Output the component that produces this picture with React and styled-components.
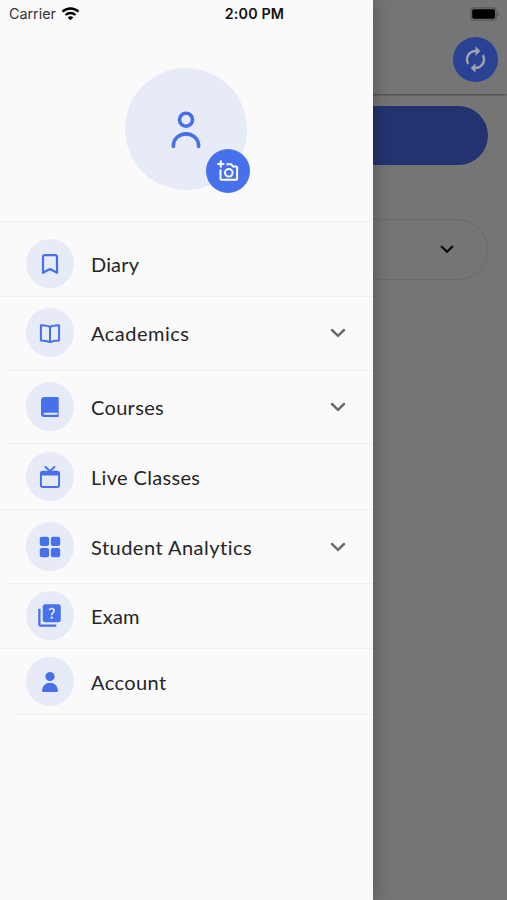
import styled, { createGlobalStyle } from "styled-components";
import { MdAutorenew, MdQuiz } from "react-icons/md";

const MENU = [
  { label: "Diary", icon: BookmarkIcon, height: 75, top: 17, spacing: 0.15 },
  { label: "Academics", icon: OpenBookIcon, height: 74, top: 11, more: true, inset: 7, spacing: 0.5 },
  { label: "Courses", icon: BookIcon, height: 73, top: 11, more: true, inset: 8, spacing: 0.32 },
  { label: "Live Classes", icon: TvIcon, height: 66, top: 8, spacing: 0.33 },
  { label: "Student Analytics", icon: GridIcon, height: 74, top: 12, more: true, inset: 7, spacing: 0.48 },
  { label: "Exam", icon: MdQuiz, iconSize: 27, height: 65, top: 7, spacing: 0.2 },
  { label: "Account", icon: PersonIcon, height: 66, top: 8, inset: 15, spacing: 0.42 },
];

function App() {
  return (
    <Screen>
      <GlobalStyle />
      <Page>
        <PageHeader>
          <RefreshButton aria-label="Refresh">
            <MdAutorenew />
          </RefreshButton>
        </PageHeader>
        <Banner />
        <Select>
          <Chevron width={14} color="#0b0b0b" />
        </Select>
      </Page>
      <Drawer>
        <Profile>
          <Avatar>
            <UserIcon />
            <CameraButton aria-label="Add photo">
              <CameraIcon />
            </CameraButton>
          </Avatar>
        </Profile>
        {MENU.map(({ label, icon: Icon, iconSize, height, top, more, inset, spacing }) => (
          <MenuItem key={label} $height={height} $top={top} $inset={inset || 0}>
            <IconCircle $iconSize={iconSize || 24}>
              <Icon />
            </IconCircle>
            <Label $spacing={spacing}>{label}</Label>
            {more && <Chevron width={16} color="#6c6c6c" />}
          </MenuItem>
        ))}
      </Drawer>
      <StatusBar>
        <Carrier>
          Carrier
          <WifiIcon />
        </Carrier>
        <Time>2:00 PM</Time>
        <BatteryIcon />
      </StatusBar>
    </Screen>
  );
}

export default App;

function Chevron({ width, color }) {
  return (
    <svg width={width} height={width * 0.625} viewBox="0 0 16 10" fill="none">
      <path
        d="M2 2l6 5.800L14 2"
        stroke={color}
        strokeWidth="2.500"
        strokeLinecap="round"
      />
    </svg>
  );
}

function WifiIcon() {
  return (
    <svg width="19" height="14" viewBox="0 0 18 14" fill="none" stroke="#000">
      <path d="M1 4.700a11.500 11.500 0 0 1 16 0" strokeWidth="2.500" />
      <path d="M4 8a7.300 7.300 0 0 1 10 0" strokeWidth="2.300" />
      <path d="M9 13.300 6.200 10.500a4 4 0 0 1 5.600 0Z" fill="#000" stroke="none" />
    </svg>
  );
}

function BatteryIcon() {
  return (
    <svg width="30" height="14" viewBox="0 0 30 14">
      <rect x=".8" y=".8" width="25.400" height="12.400" rx="3.400" fill="none" stroke="#575757" strokeWidth="1.200" />
      <rect x="2.200" y="2.300" width="22.800" height="9.500" rx="1.800" fill="#000" />
      <path d="M27.600 4.800c2 .7 2 3.700 0 4.400Z" fill="#575757" />
    </svg>
  );
}

function UserIcon() {
  return (
    <svg width="44" height="44" viewBox="0 0 44 44" fill="none" stroke="currentColor" strokeWidth="3.600">
      <circle cx="22" cy="12.700" r="6.500" />
      <path d="M9.400 39.500v-1a12.600 11.600 0 0 1 25.200 0v1" strokeLinecap="round" />
    </svg>
  );
}

function BookmarkIcon() {
  return (
    <svg viewBox="0 0 24 24" fill="none" stroke="currentColor" strokeWidth="2.200" strokeLinejoin="round">
      <path d="M5 20.800V5a1.800 1.800 0 0 1 1.800-1.800h10.400A1.800 1.800 0 0 1 19 5v15.800L12 17Z" />
    </svg>
  );
}

function OpenBookIcon() {
  return (
    <svg viewBox="0 0 24 24" fill="none" stroke="currentColor" strokeWidth="2" strokeLinejoin="round">
      <path d="M12 5.700Q7.500 4 2.900 4.200v15.200Q8 19.300 12 21q4-1.700 9.100-1.600V4.200Q16.500 4 12 5.700ZM12 5.700V21" />
    </svg>
  );
}

function BookIcon() {
  return (
    <svg viewBox="0 0 24 24" fill="currentColor">
      <path d="M6.500 2H19.500a1.200 1.200 0 0 1 1.200 1.200V22H6a3 3 0 0 1-3-3V5.500A3.500 3.500 0 0 1 6.500 2Z" />
      <path d="M6.500 18.800h12.300" stroke="#e7ebf8" strokeWidth="2" strokeLinecap="round" />
    </svg>
  );
}

function TvIcon() {
  return (
    <svg viewBox="0 0 24 24" fill="none" stroke="currentColor">
      <rect x="2.900" y="6.800" width="18.200" height="15.200" rx="2" strokeWidth="2" />
      <path d="M3.200 8.500h17.600" strokeWidth="4" />
      <path d="m7.500 2 4.500 4.200L16.500 2" strokeWidth="2" strokeLinecap="round" />
    </svg>
  );
}

function GridIcon() {
  return (
    <svg viewBox="0 0 24 24" fill="currentColor">
      <rect x="1.800" y="1.800" width="9.300" height="9.300" rx="2" />
      <rect x="12.900" y="1.800" width="9.300" height="9.300" rx="2" />
      <rect x="1.800" y="12.900" width="9.300" height="9.300" rx="2" />
      <rect x="12.900" y="12.900" width="9.300" height="9.300" rx="2" />
    </svg>
  );
}

function PersonIcon() {
  return (
    <svg viewBox="0 0 24 24" fill="currentColor">
      <circle cx="12" cy="6.500" r="4.600" />
      <path d="M4 20.500a8 7.700 0 0 1 16 0 1.500 1.500 0 0 1-1.500 1.500h-13A1.500 1.500 0 0 1 4 20.500Z" />
    </svg>
  );
}

function CameraIcon() {
  return (
    <svg width="24" height="24" viewBox="0 0 24 24" fill="none" stroke="#fff" strokeWidth="2">
      <path d="M4.800 1.500v7M1.300 5h7" />
      <path
        d="M4.500 10.500v9.300a1 1 0 0 0 1 1h14.600a1 1 0 0 0 1-1V8.500a1 1 0 0 0-1-1h-3L15 5.200h-4.500"
        strokeLinejoin="round"
      />
      <circle cx="12.800" cy="13.800" r="3.800" />
    </svg>
  );
}

const GlobalStyle = createGlobalStyle`
  * {
    box-sizing: border-box;
  }
  body {
    margin: 0;
    font-family: Lato, sans-serif;
  }
  button {
    padding: 0;
    border: 0;
  }
  svg {
    display: block;
    flex: none;
  }
`;

const Screen = styled.div`
  position: relative;
  height: 900px;
  overflow: hidden;
`;

const Page = styled.main`
  height: 100%;
  background: #757575;
`;

const PageHeader = styled.header`
  display: flex;
  justify-content: flex-end;
  height: 94px;
  padding: 37px 9.5px 0 0;
  box-shadow: 0 1px 2px rgba(0, 0, 0, 0.4);
`;

const RefreshButton = styled.button`
  display: flex;
  align-items: center;
  justify-content: center;
  width: 45px;
  height: 45px;
  border-radius: 50%;
  background: #294294;
  color: #a0a2ac;
  font-size: 29px;
`;

const Banner = styled.div`
  height: 58.5px;
  margin: 12px 19.5px 0 20px;
  border-radius: 30px;
  background: #22336f;
`;

const Select = styled.div`
  display: flex;
  align-items: center;
  justify-content: flex-end;
  height: 61px;
  margin: 54px 19.5px 0 20px;
  padding-right: 32.5px;
  border: 1px solid #6b6b6b;
  border-radius: 31px;
`;

const Drawer = styled.aside`
  position: absolute;
  top: 0;
  left: 0;
  width: 372.5px;
  height: 100%;
  background: #fafafa;
  box-shadow: 0 0 18px rgba(0, 0, 0, 0.3);
`;

const Profile = styled.div`
  display: flex;
  justify-content: center;
  height: 222px;
  padding-top: 67.5px;
  border-bottom: 1px solid #efefef;
`;

const Avatar = styled.div`
  position: relative;
  display: flex;
  align-items: center;
  justify-content: center;
  width: 122px;
  height: 122px;
  border-radius: 50%;
  background: #e7ebf8;
  color: #486fe8;
`;

const CameraButton = styled.button`
  position: absolute;
  right: -2.5px;
  bottom: -3px;
  display: flex;
  align-items: center;
  justify-content: center;
  width: 44px;
  height: 44px;
  border-radius: 50%;
  background: #4770ed;
`;

const MenuItem = styled.div`
  display: flex;
  align-items: flex-start;
  height: ${(props) => props.$height}px;
  padding: ${(props) => props.$top}px 26.5px 0 25.5px;
  background: linear-gradient(#efefef, #efefef) ${(props) => props.$inset}px
    100% / 100% 1px no-repeat;
  background-position: ${(props) => props.$inset}px 100%;

  > svg {
    margin-top: 20px;
  }
`;

const IconCircle = styled.div`
  display: flex;
  align-items: center;
  justify-content: center;
  width: 48.5px;
  height: 49px;
  margin-right: 17px;
  border-radius: 50%;
  background: #e7ebf8;
  color: #4770ed;

  svg {
    width: ${(props) => props.$iconSize}px;
    height: ${(props) => props.$iconSize}px;
  }
`;

const Label = styled.span`
  flex: 1;
  padding-top: 1px;
  color: #252525;
  font-size: 20px;
  line-height: 49px;
  letter-spacing: ${(props) => props.$spacing}px;
`;

const StatusBar = styled.div`
  position: absolute;
  top: 0;
  left: 0;
  display: grid;
  grid-template-columns: 1fr auto 1fr;
  align-items: center;
  width: 100%;
  height: 27px;
  padding: 0 7px 0 9px;
  font-family: Inter, sans-serif;
  font-size: 14.3px;

  > svg {
    justify-self: end;
  }
`;

const Carrier = styled.div`
  display: flex;
  align-items: center;
  gap: 5px;
  color: #333;
`;

const Time = styled.div`
  color: #111;
  font-weight: 600;
  letter-spacing: 0.15px;
`;
